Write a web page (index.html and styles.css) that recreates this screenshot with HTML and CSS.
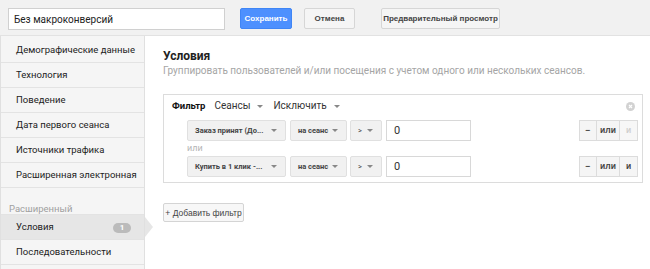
FILE: index.html
```html
<!DOCTYPE html>
<html>

<head>
    <title>Сегмент</title>
    <meta charset="utf-8">
    <meta name="viewport" content="width=device-width, initial-scale=1.0">
    <link rel="stylesheet" href="styles.css">
</head>

<body>

    <header class="topbar">
        <input class="navn" type="text" value="Без макроконверсий">
        <button class="knap blaa">Сохранить</button>
        <button class="knap annuller">Отмена</button>
        <button class="knap vis">Предварительный просмотр</button>
    </header>

    <div class="side">

        <nav class="menu">
            <div class="punkt">Демографические данные</div>
            <div class="punkt">Технология</div>
            <div class="punkt">Поведение</div>
            <div class="punkt">Дата первого сеанса</div>
            <div class="punkt">Источники трафика</div>
            <div class="punkt">Расширенная электронная</div>
            <div class="gruppe">Расширенный</div>
            <div class="punkt valgt">Условия <span class="tal">1</span></div>
            <div class="punkt">Последовательности</div>
        </nav>

        <main class="indhold">
            <h1>Условия</h1>
            <p class="tekst">Группировать пользователей и/или посещения с учетом одного или нескольких сеансов.</p>

            <div class="filterboks">
                <svg class="luk" width="9" height="9" viewBox="0 0 9 9">
                    <circle cx="4.5" cy="4.5" r="4.5" fill="#d2d2d2" />
                    <path d="M3 3 L6 6 M6 3 L3 6" stroke="#ffffff" stroke-width="1.2" />
                </svg>
                <div class="filterhoved">
                    <b>Фильтр</b>
                    <span class="drop">Сеансы</span>
                    <span class="drop">Исключить</span>
                </div>

                <div class="raekke">
                    <div class="valg v1">Заказ принят (До...</div>
                    <div class="valg v2">на сеанс</div>
                    <div class="valg v3">&gt;</div>
                    <div class="felt">0</div>
                    <div class="logik">
                        <span>−</span><span>или</span><span class="slaaet">и</span>
                    </div>
                </div>

                <div class="eller">или</div>

                <div class="raekke">
                    <div class="valg v1">Купить в 1 клик -...</div>
                    <div class="valg v2">на сеанс</div>
                    <div class="valg v3">&gt;</div>
                    <div class="felt">0</div>
                    <div class="logik">
                        <span>−</span><span>или</span><span>и</span>
                    </div>
                </div>
            </div>

            <button class="tilfoej">+ Добавить фильтр</button>
        </main>

    </div>

</body>

</html>
```
FILE: styles.css
```css
body {
    margin: 0;
    font-family: Roboto, "Liberation Sans", sans-serif;
    color: #222;
    background-color: #ffffff;
    overflow: hidden;
}

.topbar {
    height: 36px;
    background-color: #f1f1f1;
    border-bottom: 1px solid #e2e2e2;
    box-sizing: border-box;
    padding: 8px 0 0 8px;
    display: flex;
    align-items: flex-start;
}

.navn {
    width: 217px;
    height: 22px;
    box-sizing: border-box;
    border: 1px solid #d0d0d0;
    padding: 0 5px;
    font-family: Roboto, sans-serif;
    font-size: 10px;
    color: #222;
    background: #fff;
}

.knap {
    height: 21px;
    box-sizing: border-box;
    border: 1px solid #d6d6d6;
    border-radius: 2px;
    background-color: #f5f5f5;
    font-family: "Liberation Sans", Arial, sans-serif;
    font-weight: bold;
    font-size: 8px;
    color: #444;
    padding: 0;
    white-space: nowrap;
}

.blaa {
    margin-left: 15px;
    width: 52px;
    background-color: #4d90fe;
    border-color: #3f85f5;
    color: #fff;
}

.annuller {
    margin-left: 12px;
    width: 51px;
}

.vis {
    margin-left: 26px;
    width: 119px;
}

.side {
    display: flex;
}

.menu {
    width: 145px;
    flex-shrink: 0;
    background-color: #f5f5f5;
    border-right: 1px solid #e0e0e0;
    border-left: 1px solid #e0e0e0;
    box-sizing: border-box;
    padding-top: 2px;
    height: 240px;
}

.punkt {
    position: relative;
    height: 24px;
    line-height: 24px;
    border-bottom: 1px solid #e3e3e3;
    padding-left: 15px;
    font-size: 9.5px;
    color: #222;
    white-space: nowrap;
}

.gruppe {
    height: 27px;
    box-sizing: border-box;
    padding: 15px 0 0 8px;
    font-size: 9.5px;
    line-height: 12px;
    color: #a0a0a0;
    border-bottom: 1px solid #e3e3e3;
}

.valgt {
    background-color: #e6e6e6;
}

.valgt::after {
    content: "";
    position: absolute;
    right: -9px;
    top: 2px;
    border-top: 10px solid transparent;
    border-bottom: 10px solid transparent;
    border-left: 8px solid #e6e6e6;
}

.tal {
    position: absolute;
    left: 112px;
    top: 8px;
    width: 18px;
    height: 10px;
    border-radius: 5px;
    background-color: #bbbbbb;
    color: #fff;
    font-size: 8px;
    font-weight: bold;
    line-height: 10px;
    text-align: center;
}

.indhold {
    flex: 1;
    padding: 12px 0 0 18px;
}

h1 {
    margin: 0;
    font-size: 12px;
    font-weight: bold;
    line-height: 16px;
    color: #222;
}

.tekst {
    margin: 0;
    font-size: 10px;
    line-height: 13px;
    color: #a5a5a5;
}

.filterboks {
    position: relative;
    margin-top: 17px;
    width: 480px;
    height: 89px;
    box-sizing: border-box;
    border: 1px solid #dcdcdc;
    padding: 0 4px 0 23px;
}

.filterhoved {
    height: 24px;
    line-height: 22px;
    margin-left: -15px;
    font-size: 10px;
    color: #333;
    display: flex;
    gap: 8px;
}

.filterhoved b {
    color: #111;
    font-size: 9.5px;
    margin-right: 1px;
}

.drop {
    padding-right: 15px;
    position: relative;
}

.drop::after,
.valg::after {
    content: "";
    position: absolute;
    right: 2px;
    top: 10px;
    border-left: 3px solid transparent;
    border-right: 3px solid transparent;
    border-top: 3px solid #888;
}

.luk {
    position: absolute;
    right: 7px;
    top: 7px;
}

.raekke {
    display: flex;
    align-items: center;
    margin-top: 1px;
    height: 21px;
}

.valg {
    position: relative;
    height: 21px;
    box-sizing: border-box;
    border: 1px solid #e0e0e0;
    border-radius: 2px;
    background-color: #f1f1f1;
    font-family: Roboto, sans-serif;
    font-weight: bold;
    font-size: 7.5px;
    line-height: 19px;
    color: #444;
    padding-left: 7px;
    white-space: nowrap;
}

.valg::after {
    right: 8px;
    top: 8px;
}

.v1 {
    width: 99px;
}

.v2 {
    width: 57px;
    margin-left: 4px;
}

.v3 {
    width: 32px;
    margin-left: 3px;
    font-weight: normal;
}

.felt {
    width: 85px;
    height: 21px;
    box-sizing: border-box;
    margin-left: 4px;
    border: 1px solid #d8d8d8;
    font-size: 11px;
    line-height: 19px;
    padding-left: 7px;
    color: #333;
}

.logik {
    margin-left: auto;
    display: flex;
    border: 1px solid #dcdcdc;
    height: 21px;
    box-sizing: border-box;
}

.logik span {
    height: 19px;
    line-height: 19px;
    background-color: #f5f5f5;
    font-family: "Liberation Sans", Arial, sans-serif;
    font-weight: bold;
    font-size: 8.5px;
    color: #444;
    text-align: center;
    border-left: 1px solid #dcdcdc;
}

.logik span:nth-child(1) {
    width: 16px;
    border-left: none;
}

.logik span:nth-child(2) {
    width: 22px;
}

.logik span:nth-child(3) {
    width: 17px;
}

.logik .slaaet {
    color: #cfcfcf;
    background-color: #f7f7f7;
}

.eller {
    height: 13px;
    line-height: 13px;
    font-size: 9px;
    color: #b5b5b5;
    margin-top: 1px;
}

.tilfoej {
    margin-top: 20px;
    width: 81px;
    height: 19px;
    padding: 0;
    border: 1px solid #d4d4d4;
    border-radius: 2px;
    background-color: #f7f7f7;
    font-family: "Liberation Sans", Arial, sans-serif;
    font-size: 8.5px;
    color: #444;
    white-space: nowrap;
}
```
